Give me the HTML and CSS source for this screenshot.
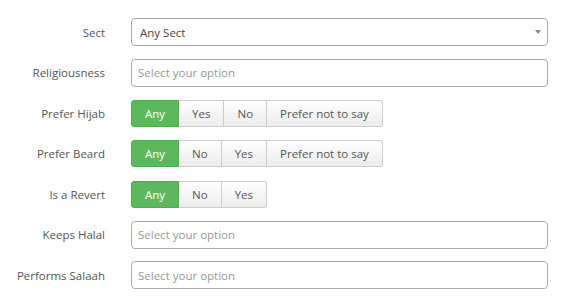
FILE: index.html
```html
<!DOCTYPE html>
<html lang="en">
<head>
    <meta charset="UTF-8">
    <meta name="viewport" content="width=device-width, initial-scale=1.0">
    <title>Search preferences</title>
    <link rel="stylesheet" href="styles.css">
</head>
<body>
    <form class="prefs">
        <label class="prefs-label">Sect</label>
        <div class="select-box">
            <span class="select-value">Any Sect</span>
            <span class="select-arrow"></span>
        </div>

        <label class="prefs-label">Religiousness</label>
        <div class="select-box">
            <span class="select-placeholder">Select your option</span>
        </div>

        <label class="prefs-label">Prefer Hijab</label>
        <div class="btn-group">
            <span class="btn active">Any</span>
            <span class="btn">Yes</span>
            <span class="btn">No</span>
            <span class="btn">Prefer not to say</span>
        </div>

        <label class="prefs-label">Prefer Beard</label>
        <div class="btn-group">
            <span class="btn active">Any</span>
            <span class="btn">No</span>
            <span class="btn">Yes</span>
            <span class="btn">Prefer not to say</span>
        </div>

        <label class="prefs-label">Is a Revert</label>
        <div class="btn-group">
            <span class="btn active">Any</span>
            <span class="btn">No</span>
            <span class="btn">Yes</span>
        </div>

        <label class="prefs-label">Keeps Halal</label>
        <div class="select-box">
            <span class="select-placeholder">Select your option</span>
        </div>

        <label class="prefs-label">Performs Salaah</label>
        <div class="select-box">
            <span class="select-placeholder">Select your option</span>
        </div>
    </form>
</body>
</html>
```

FILE: styles.css
```css
body {
    font-family: 'Open Sans', 'Noto Sans', sans-serif;
    font-size: 11.5px;
    color: #555;
    margin: 0;
    padding: 18px 0 0 0;
    background-color: #fff;
}
.prefs {
    display: grid;
    grid-template-columns: 105px 417px;
    column-gap: 26px;
    row-gap: 12.5px;
    grid-auto-rows: 28px;
    align-items: center;
}
.prefs-label {
    text-align: right;
    color: #555;
}
.select-box {
    position: relative;
    box-sizing: border-box;
    height: 28px;
    border: 1px solid #aaa;
    border-radius: 4px;
    display: flex;
    align-items: center;
    padding: 0 6px;
}
.select-value {
    color: #444;
    padding-left: 2px;
}
.select-placeholder {
    color: #999;
}
.select-arrow {
    position: absolute;
    right: 6px;
    top: 11px;
    width: 0;
    height: 0;
    border-style: solid;
    border-width: 4px 3px 0 3px;
    border-color: #888 transparent transparent transparent;
}
.btn-group {
    display: flex;
    height: 27px;
}
.btn {
    display: flex;
    align-items: center;
    padding: 0 13px;
    border: 1px solid #ccc;
    border-left-width: 0;
    background: linear-gradient(#fff, #ececec);
    color: #555;
}
.btn:first-child {
    border-left-width: 1px;
    border-radius: 3px 0 0 3px;
}
.btn:last-child {
    border-radius: 0 3px 3px 0;
}
.btn.active {
    background: #5cb85c;
    border-color: #4cae4c;
    color: #fff;
}
```
